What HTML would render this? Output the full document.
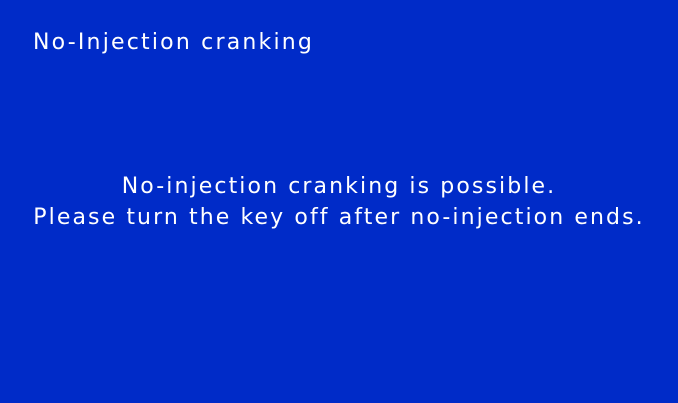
<!DOCTYPE html>
<html><head><style>
html,body{margin:0;padding:0}
body{width:678px;height:403px;background:#002bc8;color:#fff;font-family:"DejaVu Sans","Liberation Sans",sans-serif;position:relative;overflow:hidden}
.t{position:absolute;left:33px;top:30px;font-size:22px;letter-spacing:2.2px;white-space:nowrap}
.m{position:absolute;left:0;width:678px;text-align:center;top:171px;font-size:22px;letter-spacing:2.1px;line-height:31px;white-space:nowrap}
</style></head><body>
<div class="t">No-Injection cranking</div>
<div class="m">No-injection cranking is possible.<br>Please turn the key off after no-injection ends.</div>
</body></html>
